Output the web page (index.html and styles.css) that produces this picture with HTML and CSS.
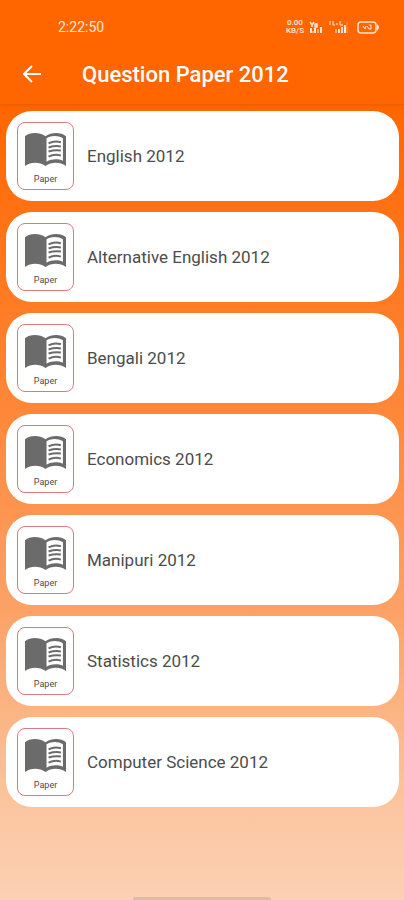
FILE: index.html
```html
<!DOCTYPE html>
<html lang="en">
<head>
  <meta charset="UTF-8" />
  <meta name="viewport" content="width=device-width, initial-scale=1.0" />
  <title>Question Paper 2012</title>
  <link rel="stylesheet" href="styles.css">
</head>
<body>
  <!-- Shared book icon -->
  <svg class="sprite" aria-hidden="true">
    <symbol id="book" viewBox="0 0 40 32">
      <path fill="#6b6b6b" d="M0 3C5-1 14-1 20 3C26-1 35-1 40 3V32C34 28 26 28 20 32C14 28 6 28 0 32Z" />
      <path fill="#fff" d="M21 5C26 2 32 2 37 5V27C32 25 26 25 21 28Z" />
      <path fill="none" stroke="#6b6b6b" stroke-width="2" d="M23 10Q29 7 35 9M23 14Q29 12 35 13M23 18Q29 16 35 17M23 23Q29 20 35 22" />
    </symbol>
  </svg>

  <header class="top">
    <div class="status">
      <span class="clock">2:22:50</span>
      <div class="status-icons">
        <div class="speed"><span>0.00</span><span>KB/S</span></div>
        <svg width="14" height="14" viewBox="0 0 14 14" fill="none" stroke="#ffe6d2" stroke-width="2" aria-hidden="true">
          <path d="M1 2l2 3l2-3M3 5v2M6 4h2v3h-2z" stroke-width="1.5" />
          <path d="M2 8v5M6 8v5M12 7v6" />
          <path stroke-width="1" d="M3 12h4M9 9v4" />
        </svg>
        <svg width="20" height="14" viewBox="0 0 20 14" fill="none" stroke="#ffe6d2" stroke-width="1" aria-hidden="true">
          <path d="M2 1v4M5 1v4h2M8 4h2M12 1v4h3M8 9v4" />
          <path stroke-width="2" d="M11 9v4M14 7v6M17 5v8" />
          <path stroke-opacity=".4" d="M19 2v11" />
        </svg>
        <svg class="battery" width="23" height="13" viewBox="0 0 23 13" fill="none" stroke="#ffe6d2" aria-hidden="true">
          <rect x="1" y="1" width="18" height="11" rx="3" stroke-width="1.5" />
          <path fill="#ffe6d2" stroke="none" d="M20 3q4 3 0 7z" />
          <path d="M6 5l2 3l1-3M10 5l2 3M12 4h2v4h-2" />
        </svg>
      </div>
    </div>
    <div class="toolbar">
      <button class="back" type="button" aria-label="Back">
        <svg width="18" height="18" viewBox="0 0 18 18" fill="none" stroke="#fff" stroke-width="2" aria-hidden="true">
          <path d="M18 9H2M9 1L1 9l8 8" />
        </svg>
      </button>
      <h1>Question Paper 2012</h1>
    </div>
  </header>

  <main class="papers">
    <a class="card" href="#">
      <span class="thumb"><svg class="book"><use href="#book" /></svg>Paper</span>
      <span class="name">English 2012</span>
    </a>
    <a class="card" href="#">
      <span class="thumb"><svg class="book"><use href="#book" /></svg>Paper</span>
      <span class="name">Alternative English 2012</span>
    </a>
    <a class="card" href="#">
      <span class="thumb"><svg class="book"><use href="#book" /></svg>Paper</span>
      <span class="name">Bengali 2012</span>
    </a>
    <a class="card" href="#">
      <span class="thumb"><svg class="book"><use href="#book" /></svg>Paper</span>
      <span class="name">Economics 2012</span>
    </a>
    <a class="card" href="#">
      <span class="thumb"><svg class="book"><use href="#book" /></svg>Paper</span>
      <span class="name">Manipuri 2012</span>
    </a>
    <a class="card" href="#">
      <span class="thumb"><svg class="book"><use href="#book" /></svg>Paper</span>
      <span class="name">Statistics 2012</span>
    </a>
    <a class="card" href="#">
      <span class="thumb"><svg class="book"><use href="#book" /></svg>Paper</span>
      <span class="name">Computer Science 2012</span>
    </a>
  </main>

  <div class="home-bar"></div>
</body>
</html>
```

FILE: styles.css
```css
* {
  margin: 0;
  padding: 0;
  box-sizing: border-box;
}
body {
  display: flex;
  flex-direction: column;
  min-height: 100vh;
  font-family: Roboto, "Liberation Sans", sans-serif;
  background: linear-gradient(#ff6600 12%, #fe8737 45%, #fca267 68%, #fbc6a0 90%, #fcd0b4 100%);
}
.sprite {
  position: absolute;
  width: 0;
  height: 0;
}

/* ===== Header ===== */
.top {
  background: #ff6600;
  color: #fff;
  box-shadow: 0 1px 4px rgba(120, 40, 0, 0.2);
}
.status {
  display: flex;
  justify-content: space-between;
  align-items: center;
  height: 44px;
  padding: 10px 24px 0 58px;
  color: #ffe6d2;
}
.clock {
  font-size: 14px;
}
.status-icons {
  display: flex;
  align-items: center;
  gap: 5px;
}
.speed {
  display: flex;
  flex-direction: column;
  align-items: center;
  font-size: 8px;
  font-weight: 500;
  line-height: 8px;
}
.battery {
  margin-left: 4px;
}
.toolbar {
  display: flex;
  align-items: center;
  gap: 34px;
  height: 60px;
  padding: 0 16px;
}
.back {
  display: flex;
  justify-content: center;
  align-items: center;
  width: 32px;
  height: 32px;
  border: none;
  background: none;
  cursor: pointer;
}
h1 {
  font-size: 22px;
  font-weight: 500;
}

/* ===== Paper list ===== */
.papers {
  display: flex;
  flex-direction: column;
  gap: 11px;
  padding: 7px 5px 0 6px;
}
.card {
  display: flex;
  align-items: center;
  gap: 13px;
  height: 90px;
  padding: 0 11px;
  border-radius: 26px;
  background: #fff;
  color: #4c4c4c;
  text-decoration: none;
}
.thumb {
  display: flex;
  flex-direction: column;
  align-items: center;
  gap: 8px;
  width: 57px;
  height: 68px;
  padding-top: 10px;
  border: 1px solid #e07880;
  border-radius: 8px;
  font-size: 9px;
  line-height: 10px;
}
.book {
  width: 41px;
  height: 33px;
}
.name {
  font-size: 17px;
}

/* ===== Gesture bar ===== */
.home-bar {
  width: 34%;
  height: 3px;
  margin: auto auto 0;
  border-radius: 3px 3px 0 0;
  background: #dfbba3;
}
```
